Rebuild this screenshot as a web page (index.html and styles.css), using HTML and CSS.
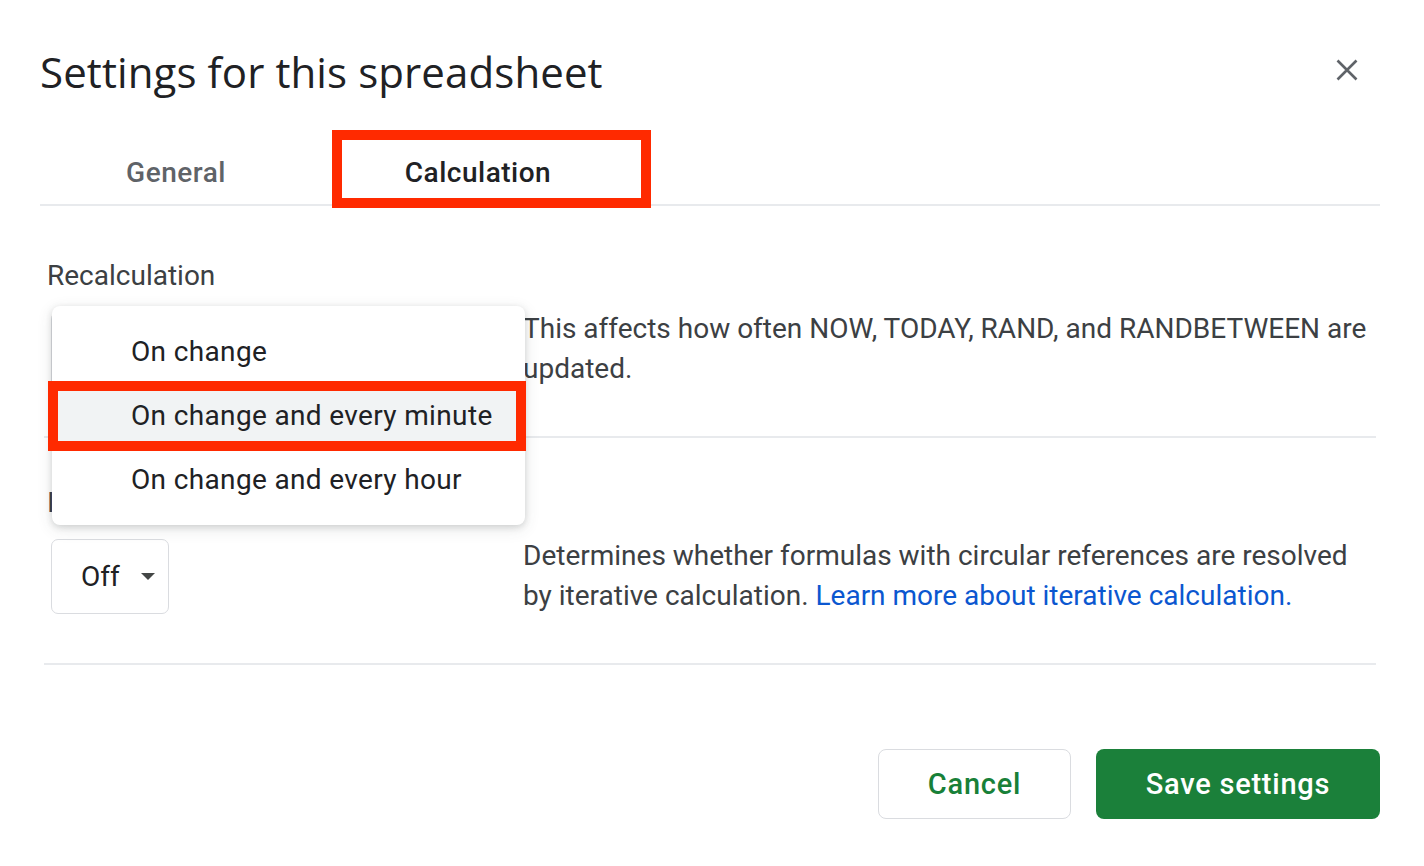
FILE: index.html
```html
<!DOCTYPE html>
<html>
<head>
<meta charset="utf-8">
<link rel="stylesheet" href="styles.css">
</head>
<body>
<div class="dialog">
  <div class="header">
    <h1 class="title">Settings for this spreadsheet</h1>
    <button class="close" aria-label="Close">
      <svg width="22" height="22" viewBox="0 0 22 22"><path d="M1.5 1.5 L20.5 20.5 M20.5 1.5 L1.5 20.5" stroke="#5f6368" stroke-width="2.6" fill="none"/></svg>
    </button>
  </div>
  <div class="tabs">
    <div class="tab">General</div>
    <div class="tab active">Calculation</div>
  </div>

  <div class="section first">
    <div class="label">Recalculation</div>
    <div class="row">
      <div class="left">
        <div class="select wide"><span>On change</span><span class="caret"></span></div>
      </div>
      <div class="desc">This affects how often NOW, TODAY, RAND, and RANDBETWEEN are updated.</div>
    </div>
  </div>

  <div class="section second">
    <div class="label">Iterative calculation</div>
    <div class="row">
      <div class="left">
        <div class="select"><span>Off</span><span class="caret"></span></div>
      </div>
      <div class="desc">Determines whether formulas with circular references are resolved by iterative calculation. <a class="link" href="#">Learn more about iterative calculation.</a></div>
    </div>
  </div>

  <div class="footer">
    <button class="btn cancel">Cancel</button>
    <button class="btn save">Save settings</button>
  </div>

  <div class="menu">
    <div class="item">On change</div>
    <div class="item hover">On change and every minute</div>
    <div class="item">On change and every hour</div>
  </div>

  <div class="mark mark-tab"></div>
  <div class="mark mark-item"></div>
</div>
</body>
</html>
```

FILE: styles.css
```css
* { box-sizing: border-box; }
html, body { margin: 0; padding: 0; background: #fff; }
body { font-family: Roboto, "Liberation Sans", sans-serif; color: #3c4043; }

.dialog {
  position: relative;
  width: 1424px;
  height: 866px;
  padding: 44px 44px 0 40px;
}

.header {
  display: flex;
  align-items: center;
  justify-content: space-between;
  height: 56px;
}
.title {
  margin: 0;
  font-family: "Open Sans", Roboto, sans-serif;
  font-weight: 400;
  font-size: 42px;
  letter-spacing: 0.1px;
  color: #202124;
  line-height: 56px;
}
.close {
  border: 0;
  background: none;
  padding: 0;
  margin-right: 22px;
  width: 22px;
  height: 22px;
  margin-top: -4px;
  display: flex;
}

.tabs {
  display: flex;
  gap: 30px;
  margin-top: 40px;
  height: 66px;
  padding-top: 2px;
  border-bottom: 2px solid #e8eaed;
}
.tab {
  width: 272px;
  text-align: center;
  font-size: 28px;
  font-weight: 500;
  letter-spacing: 0.5px;
  line-height: 62px;
  color: #5f6368;
}
.tab.active { color: #202124; }

.section {
  margin: 0 4px;
  padding: 47px 0 47px 3px;
  border-bottom: 2px solid #e8eaed;
}
.section.first { padding-top: 54px; }
.section.second { padding-top: 49px; }
.label {
  font-size: 28px;
  line-height: 32px;
  color: #3c4043;
}
.row {
  display: flex;
  margin-top: 17px;
}
.left {
  width: 476px;
  flex: none;
  padding-left: 4px;
  padding-top: 3px;
}
.select {
  display: inline-flex;
  align-items: center;
  height: 75px;
  width: 118px;
  padding: 0 13px 0 29px;
  border: 1.5px solid #dadce0;
  border-radius: 7px;
  font-size: 28px;
  color: #202124;
  justify-content: space-between;
}
.select.wide { width: 300px; }
.caret {
  width: 0;
  height: 0;
  border-left: 7px solid transparent;
  border-right: 7px solid transparent;
  border-top: 7px solid #444746;
}
.desc {
  flex: 1;
  font-size: 28px;
  line-height: 40px;
  color: #3c4043;
}
.link { color: #0b57d0; text-decoration: none; }

.footer {
  display: flex;
  justify-content: flex-end;
  gap: 25px;
  margin-top: 84px;
}
.btn {
  height: 70px;
  border-radius: 8px;
  font-family: Roboto, sans-serif;
  font-size: 29px;
  font-weight: 500;
  letter-spacing: 0.75px;
}
.cancel {
  width: 193px;
  background: #fff;
  border: 1.5px solid #dadce0;
  color: #188038;
}
.save {
  width: 284px;
  background: #1b803a;
  border: 0;
  color: #fff;
}

.menu {
  position: absolute;
  left: 52px;
  top: 306px;
  width: 473px;
  padding: 14px 0 13px;
  background: #fff;
  border-radius: 8px;
  box-shadow: 0 2px 6px rgba(60,64,67,0.18), 0 4px 16px rgba(60,64,67,0.12);
}
.item {
  height: 64px;
  line-height: 64px;
  padding-left: 79px;
  font-size: 28px;
  letter-spacing: 0.35px;
  color: #202124;
}
.item.hover { background: #f1f3f4; }

.mark {
  position: absolute;
  border: 10px solid #ff2a00;
}
.mark-tab { left: 332px; top: 130px; width: 319px; height: 78px; }
.mark-item { left: 48px; top: 381px; width: 478px; height: 70px; }
```
